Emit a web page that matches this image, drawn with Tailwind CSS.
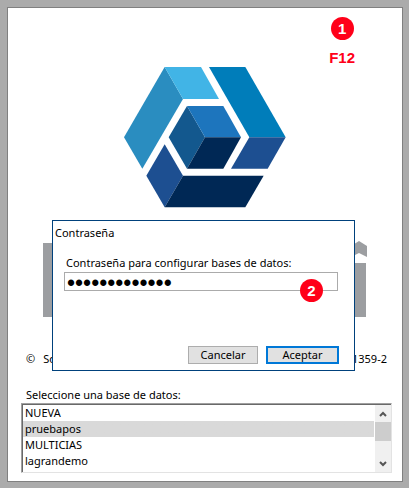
<!DOCTYPE html>
<html lang="es">
<head>
  <meta charset="UTF-8">
  <meta name="viewport" content="width=device-width, initial-scale=1.0">
  <title>Contraseña</title>
  <script src="https://cdn.jsdelivr.net/npm/@tailwindcss/browser@4"></script>
</head>
<body class="min-h-screen bg-[#ababab] p-[7px] pr-[6px] font-['Noto_Sans',sans-serif] text-[11px] leading-4 text-black">

  <main class="relative flex flex-col border border-[#808080] bg-white pt-[59px] pb-2">

    <!-- LOGO -->
    <svg class="mx-auto h-[141px] w-[162px]" viewBox="27 21 486 423" aria-hidden="true">
      <path fill="#2a8dc0" d="M149 21 204 117 82 326 27 232z"/>
      <path fill="#41b4e6" d="M149 21H258L312 117H204z"/>
      <path fill="#007dba" d="M282 21H391L512 232H403z"/>
      <path fill="#1d4f91" d="M403 232H512L458 326H348z"/>
      <path fill="#13588e" d="M216 138 270 232 216 326 161 232z"/>
      <path fill="#1d75bd" d="M216 138H325L378 232H270z"/>
      <path fill="#002855" d="M270 232H378L325 326H216z"/>
      <path fill="#1d4f91" d="M149 253 204 347 149 442 94 347z"/>
      <path fill="#002855" d="M204 347H446L391 442H149z"/>
    </svg>

    <!-- NOMBRE -->
    <div class="mt-[33px] flex items-end justify-between pr-[35px] pl-[35px]">
      <svg class="h-[74px] w-5" viewBox="0 0 20 74" aria-hidden="true">
        <path fill="#9c9ea1" d="M0 0H20V74H0z"/>
      </svg>
      <svg class="h-[76px] w-5" viewBox="0 0 20 76" aria-hidden="true">
        <path fill="#9c9ea1" d="M4 5 12 0 20 5V16L12 12 4 16zM4 22H19V76H4z"/>
      </svg>
    </div>

    <div class="mt-[34px] flex justify-between pr-[15px] pl-[18px]">
      <span class="flex gap-2"><span>©</span><span>So</span></span>
      <span>1359-2</span>
    </div>

    <!-- BASES DE DATOS -->
    <div class="mt-5 pr-[10px] pl-[13px]">
      <label for="base" class="block pl-[5px]">Seleccione una base de datos:</label>
      <div class="flex border border-t-[#a0a0a0] border-r-[#e3e3e3] border-b-[#e3e3e3] border-l-[#a0a0a0]">
        <div class="flex h-[68px] flex-1 border-t border-l border-[#696969]">
          <select id="base" size="4" class="h-[66px] flex-1 appearance-none overflow-hidden bg-white p-0 outline-none">
            <option class="h-4 min-h-4 px-[2px] py-0 leading-4">NUEVA</option>
            <option selected class="h-4 min-h-4 bg-linear-to-r from-[#d9d9d9] to-[#d9d9d9] px-[2px] py-0 leading-4 text-black">pruebapos</option>
            <option class="h-4 min-h-4 px-[2px] py-0 leading-4">MULTICIAS</option>
            <option class="h-4 min-h-4 px-[2px] py-0 leading-4">lagrandemo</option>
          </select>
          <div class="ml-px flex w-4 flex-col bg-[#f0f0f0]">
            <button type="button" aria-label="Subir" class="flex h-[17px] items-center justify-center">
              <svg class="h-2 w-2" viewBox="0 0 8 8"><path fill="none" stroke="#555" stroke-width="2" d="M1 6 4 3 7 6"/></svg>
            </button>
            <div class="h-[19px] bg-[#cdcdcd]"></div>
            <button type="button" aria-label="Bajar" class="mt-auto flex h-[17px] items-center justify-center">
              <svg class="h-2 w-2" viewBox="0 0 8 8"><path fill="none" stroke="#555" stroke-width="2" d="M1 2 4 5 7 2"/></svg>
            </button>
          </div>
        </div>
      </div>
    </div>

    <!-- PASO 1 -->
    <div class="absolute top-[9px] right-[47px] flex flex-col items-center gap-3 font-['Liberation_Sans',sans-serif] text-[15px] font-bold text-[#ff0019]">
      <span class="flex size-[23px] items-center justify-center rounded-full bg-[#ff0019] text-white">1</span>
      <span class="leading-3">F12</span>
    </div>

    <!-- DIÁLOGO -->
    <form class="absolute top-[212px] right-[47px] left-[44px] border border-[#00417c] bg-white pb-[6px]">
      <h2 class="pt-1 pl-[2px]">Contraseña</h2>
      <div class="relative mt-[14px] pr-4 pl-[11px]">
        <label for="clave" class="block pl-[2px]">Contraseña para configurar bases de datos:</label>
        <input id="clave" type="password" value="1234567890123" class="mt-px block h-[19px] w-full border border-[#ababab] px-[2px] pt-1 font-['Liberation_Sans',sans-serif] text-[23px] leading-4 outline-none">
        <span class="absolute right-[31px] -bottom-[11px] flex size-[23px] items-center justify-center rounded-full bg-[#ff0019] font-['Liberation_Sans',sans-serif] text-[15px] font-bold text-white">2</span>
      </div>
      <div class="mt-[55px] flex justify-end gap-2 pr-[15px]">
        <button type="button" class="h-[18px] w-[70px] border border-[#adadad] bg-[#e1e1e1] leading-4">Cancelar</button>
        <button type="submit" class="h-[18px] w-[73px] border-2 border-[#0078d7] bg-[#e1e1e1] leading-[14px]">Aceptar</button>
      </div>
    </form>

  </main>
</body>
</html>
